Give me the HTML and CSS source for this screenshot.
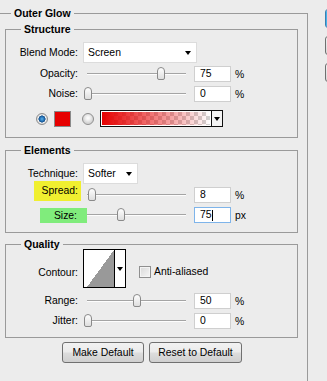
FILE: index.html
```html
<!DOCTYPE html>
<html>
<head>
<meta charset="utf-8">
<link rel="stylesheet" href="styles.css">
</head>
<body>
<div class="dialog">
  <fieldset class="panel">
    <legend class="panel-title">Outer Glow</legend>

    <fieldset class="group group-structure">
      <legend class="group-title">Structure</legend>
      <div class="rows">
        <div class="row row-blend">
          <span class="label">Blend Mode:</span>
          <div class="select select-blend"><span>Screen</span><i class="caret"></i></div>
        </div>
        <div class="row row-opacity">
          <span class="label">Opacity:</span>
          <div class="slider"><span class="thumb" style="left:73px"></span></div>
          <div class="num">75</div>
          <span class="unit">%</span>
        </div>
        <div class="row row-noise">
          <span class="label">Noise:</span>
          <div class="slider"><span class="thumb" style="left:0px"></span></div>
          <div class="num">0</div>
          <span class="unit">%</span>
        </div>
        <div class="color-row">
          <span class="radio checked"></span>
          <span class="swatch"></span>
          <span class="radio"></span>
          <div class="gradient">
            <span class="gradient-fill"></span>
            <span class="gradient-caret"><i class="caret"></i></span>
          </div>
        </div>
      </div>
    </fieldset>

    <fieldset class="group group-elements">
      <legend class="group-title">Elements</legend>
      <div class="rows">
        <div class="row row-technique">
          <span class="label">Technique:</span>
          <div class="select select-technique"><span>Softer</span><i class="caret"></i></div>
        </div>
        <div class="row row-spread">
          <span class="label"><span class="mark mark-yellow">Spread:</span></span>
          <div class="slider"><span class="thumb" style="left:4px"></span></div>
          <div class="num">8</div>
          <span class="unit">%</span>
        </div>
        <div class="row row-size">
          <span class="label"><span class="mark mark-green">Size:</span></span>
          <div class="slider"><span class="thumb" style="left:33px"></span></div>
          <div class="num focus">75<i class="text-cursor"></i></div>
          <span class="unit">px</span>
        </div>
      </div>
    </fieldset>

    <fieldset class="group group-quality">
      <legend class="group-title">Quality</legend>
      <div class="rows">
        <div class="row row-contour">
          <span class="label label-contour">Contour:</span>
          <div class="contour-controls">
            <div class="contour">
              <span class="contour-curve"></span>
              <span class="contour-caret"><i class="caret"></i></span>
            </div>
            <span class="checkbox"></span>
            <span class="check-label">Anti-aliased</span>
          </div>
        </div>
        <div class="row row-range">
          <span class="label">Range:</span>
          <div class="slider"><span class="thumb" style="left:49px"></span></div>
          <div class="num">50</div>
          <span class="unit">%</span>
        </div>
        <div class="row row-jitter">
          <span class="label">Jitter:</span>
          <div class="slider"><span class="thumb" style="left:0px"></span></div>
          <div class="num">0</div>
          <span class="unit">%</span>
        </div>
      </div>
    </fieldset>

    <div class="actions">
      <button class="btn btn-make">Make Default</button>
      <button class="btn btn-reset">Reset to Default</button>
    </div>
  </fieldset>

  <div class="side">
    <span class="side-btn side-default"></span>
    <span class="side-btn"></span>
    <span class="side-btn"></span>
  </div>
</div>
</body>
</html>
```

FILE: styles.css
```css
* { box-sizing: border-box; }

html, body {
  margin: 0;
  padding: 0;
  overflow: hidden;
}

body {
  width: 327px;
  height: 381px;
  background: #ececec;
  color: #000;
  font-family: "Liberation Sans", Arial, sans-serif;
  font-size: 10.4px;
}

.dialog {
  display: flex;
  align-items: flex-start;
}

/* ---------- outer panel ---------- */
.panel {
  flex: 0 0 308px;
  width: 308px;
  height: 375px;
  margin: 6px 0 0 0;
  padding: 0 9px 0 0;
  border: 1px solid #9a9a9a;
  border-left: none;
  border-bottom: none;
  min-inline-size: 0;
}

.panel-title {
  margin-left: 11px;
  padding: 0 3px;
  font-weight: bold;
  font-size: 10.5px;
  line-height: 14px;
}

/* ---------- groups ---------- */
.group {
  margin: 2px 0 0 5px;
  padding: 0;
  border: 1px solid #9a9a9a;
  min-inline-size: 0;
}

.group-title {
  margin-left: 15px;
  padding: 0 3px;
  font-weight: bold;
  font-size: 10.5px;
  line-height: 14px;
}

.group-elements { margin-top: 5px; }
.group-quality { margin-top: 4px; }

.group-structure .rows { padding: 6px 0 10px; }
.group-elements .rows { padding: 6px 0 9px; }
.group-quality .rows { padding: 0 0 8px; }

/* ---------- rows ---------- */
.row {
  display: grid;
  grid-template-columns: 72px 116px 37px auto;
  align-items: center;
  height: 16px;
}

.label {
  text-align: right;
  line-height: 16px;
  white-space: nowrap;
}

.row-blend, .row-technique { height: 21px; }
.row-opacity { margin-top: 3px; }
.row-noise { margin-top: 4px; }
.row-spread { margin-top: 3px; }
.row-size { margin-top: 4px; }
.row-contour { height: 39px; margin-top: -2px; align-items: start; }
.row-range { margin-top: 5px; }
.row-jitter { margin-top: 4px; }

.label-contour { margin-top: 16px; }

/* highlight marks */
.mark {
  display: inline-block;
  white-space: nowrap;
}
.row-spread .label { align-self: start; display: flex; justify-content: flex-end; }
.mark-yellow {
  background: #f0ef30;
  padding: 2px 3px 2px 8px;
  margin-right: -3px;
  margin-top: -6px;
  line-height: 16px;
}
.row-size .label { display: flex; justify-content: flex-end; }
.mark-green {
  background: #80ec7c;
  padding: 0 10px 0 14px;
  margin-right: -9px;
  line-height: 15px;
}

/* ---------- select ---------- */
.select {
  grid-column: 2 / 5;
  display: flex;
  align-items: center;
  justify-content: space-between;
  height: 21px;
  margin-left: 5px;
  padding: 0 5px 0 4px;
  background: #fff;
  border: 1px solid #dcdcdc;
}
.select-blend { width: 114px; }
.select-technique { width: 55px; }

.caret {
  display: block;
  width: 0;
  height: 0;
  border-left: 3.5px solid transparent;
  border-right: 3.5px solid transparent;
  border-top: 4px solid #000;
}

/* ---------- slider ---------- */
.slider {
  position: relative;
  width: 102px;
  height: 16px;
  margin-left: 6px;
  background:
    linear-gradient(#a4a4a4, #a4a4a4) 3px 7px / 99px 1px no-repeat,
    linear-gradient(#fdfdfd, #fdfdfd) 3px 8px / 99px 1px no-repeat;
}

.thumb {
  position: absolute;
  top: 1px;
  width: 8px;
  height: 13px;
  border: 1px solid #8a8a8a;
  border-radius: 4px 4px 2px 2px;
  background: linear-gradient(#fefefe, #dedede);
}

/* ---------- number fields ---------- */
.num {
  width: 37px;
  height: 16px;
  padding-left: 5px;
  line-height: 14px;
  background: #fff;
  border: 1px solid #cfcfcf;
  display: flex;
  align-items: center;
}
.num.focus { border-color: #7eb4ea; }
.text-cursor {
  display: block;
  width: 1px;
  height: 11px;
  background: #000;
}
.unit { margin-left: 4px; }

/* ---------- color row ---------- */
.color-row {
  display: flex;
  align-items: center;
  height: 17px;
  margin-top: 8px;
  padding-left: 30px;
}

.radio {
  width: 12px;
  height: 12px;
  border-radius: 50%;
  border: 1px solid #8e8e8e;
  background: radial-gradient(circle at 50% 40%, #ffffff 0, #f2f2f2 2px, #d4d4d4 5px);
}
.radio.checked {
  background: radial-gradient(circle at 50% 50%, #5fb3e8 0, #2c7cc0 1.8px, #154f8a 3.3px, #f2f2f2 3.8px, #d6d6d6 5px);
}

.swatch {
  width: 17px;
  height: 16px;
  margin-left: 6px;
  border: 1px solid #8a8a8a;
  background: #e60000;
}
.color-row .radio:nth-child(3) { margin-left: 11px; }

.gradient {
  display: flex;
  width: 123px;
  height: 17px;
  margin-left: 6px;
  border: 1px solid #111;
}
.gradient-fill {
  flex: 1;
  border: 1px solid #fff;
  background:
    linear-gradient(to right, #e60000 0%, rgba(230, 0, 0, 0) 100%),
    repeating-conic-gradient(#d2d2d2 0 25%, #ffffff 0 50%) 0 0 / 8px 8px;
}
.gradient-caret {
  width: 11px;
  border-left: 1px solid #111;
  background: #f4f4f4;
  display: flex;
  align-items: center;
  justify-content: center;
}

/* ---------- contour ---------- */
.contour-controls {
  grid-column: 2 / 5;
  display: flex;
  align-items: flex-start;
  margin-left: 5px;
}
.contour {
  display: flex;
  width: 43px;
  height: 39px;
  border: 1px solid #000;
  background: #fff;
}
.contour-curve {
  flex: 1;
  margin-left: 3px;
  background: linear-gradient(to top left, #999999 50%, #ffffff 50%);
}
.contour-caret {
  width: 11px;
  border-left: 1px solid #000;
  display: flex;
  align-items: center;
  justify-content: center;
}

.checkbox {
  width: 12px;
  height: 12px;
  margin: 17px 0 0 13px;
  border: 1px solid #8f8f8f;
  background: linear-gradient(135deg, #d8d8d8, #f6f6f6);
  box-shadow: inset 0 0 0 1px #f4f4f4;
}
.check-label {
  margin: 16px 0 0 3px;
  line-height: 14px;
}

/* ---------- buttons ---------- */
.actions {
  display: flex;
  gap: 5px;
  margin-top: 4px;
  padding-left: 62px;
}
.btn {
  height: 21px;
  padding: 0;
  border: 1px solid #707070;
  border-radius: 3px;
  background: linear-gradient(#f2f2f2 0%, #ebebeb 48%, #dddddd 52%, #cfcfcf 100%);
  font-family: "Liberation Sans", Arial, sans-serif;
  font-size: 10.4px;
  color: #000;
}
.btn-make { width: 82px; }
.btn-reset { width: 93px; }

/* ---------- side buttons (cut off at the frame edge) ---------- */
.side {
  flex: 0 0 2px;
  width: 2px;
  overflow: hidden;
  display: flex;
  flex-direction: column;
  gap: 8px;
  margin: 9px 0 0 17px;
}
.side-btn {
  display: block;
  flex: 0 0 19px;
  width: 80px;
  height: 19px;
  border: 1px solid #707070;
  border-radius: 3px;
  background: linear-gradient(#f2f2f2, #d8d8d8);
}
.side-default {
  border-color: #3c7fb1;
  box-shadow: inset 0 0 0 1px #48b3ea;
  background: linear-gradient(#eaf6fd, #bee6fd);
}
```
